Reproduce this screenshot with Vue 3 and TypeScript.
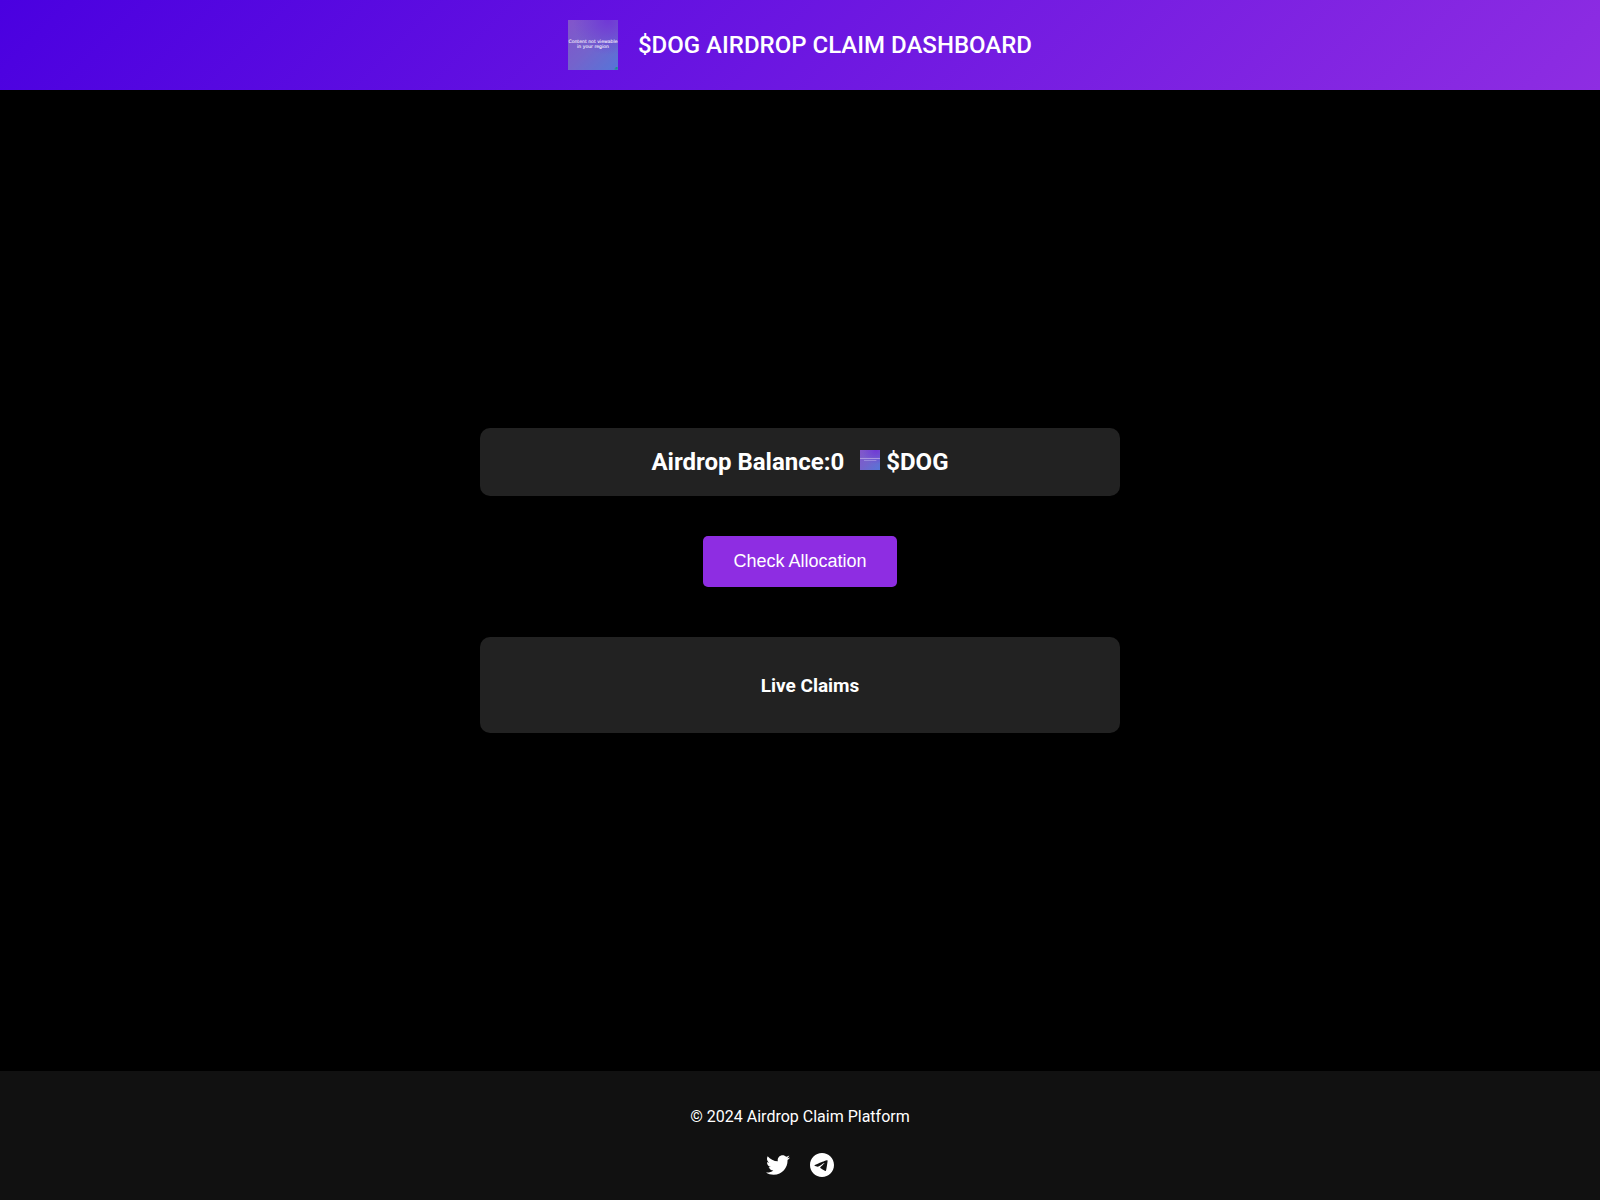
<script setup lang="ts">
import { ref } from 'vue'

interface SocialLink {
  label: string
  href: string
  viewBox: string
  path: string
}

const balance = ref<number>(0)
const claims = ref<string[]>([])

const socials: SocialLink[] = [
  {
    label: 'Twitter',
    href: '#twitter',
    viewBox: '0 0 512 512',
    path: 'M459.37 151.716c.325 4.548.325 9.097.325 13.645 0 138.72-105.583 298.558-298.558 298.558-59.452 0-114.68-17.219-161.137-47.106 8.447.974 16.568 1.299 25.34 1.299 49.055 0 94.213-16.568 130.274-44.832-46.132-.975-84.792-31.188-98.112-72.772 6.498.974 12.995 1.624 19.818 1.624 9.421 0 18.843-1.3 27.614-3.573-48.081-9.747-84.143-51.98-84.143-102.985v-1.299c13.969 7.797 30.214 12.67 47.431 13.319-28.264-18.843-46.781-51.005-46.781-87.391 0-19.492 5.197-37.36 14.294-52.954 51.655 63.675 129.3 105.258 216.365 109.807-1.624-7.797-2.599-15.918-2.599-24.04 0-57.828 46.782-104.934 104.934-104.934 30.213 0 57.502 12.67 76.67 33.137 23.715-4.548 46.456-13.32 66.599-25.34-7.798 24.366-24.366 44.833-46.132 57.827 21.117-2.273 41.584-8.122 60.426-16.243-14.292 20.791-32.161 39.308-52.628 54.253z',
  },
  {
    label: 'Telegram',
    href: '#telegram',
    viewBox: '0 8 496 496',
    path: 'M248,8C111.033,8,0,119.033,0,256S111.033,504,248,504,496,392.967,496,256,384.967,8,248,8ZM362.952,176.66c-3.732,39.215-19.881,134.378-28.1,178.3-3.476,18.584-10.322,24.816-16.948,25.425-14.4,1.326-25.338-9.517-39.287-18.661-21.827-14.308-34.158-23.215-55.346-37.177-24.485-16.135-8.612-25,5.342-39.5,3.652-3.793,67.107-61.51,68.335-66.746.153-.655.3-3.1-1.154-4.384s-3.59-.849-5.135-.5q-3.283.746-104.608,69.142-14.845,10.194-26.894,9.934c-8.855-.191-25.888-5.006-38.551-9.123-15.531-5.048-27.875-7.717-26.8-16.291q.84-6.7,18.45-13.7,108.446-47.248,144.628-62.3c68.872-28.647,83.183-33.623,92.511-33.789,2.052-.034,6.639.474,9.61,2.885a10.452,10.452,0,0,1,3.53,6.716A43.765,43.765,0,0,1,362.952,176.66Z',
  },
]
</script>

<template>
  <div class="page">
    <header class="header">
      <svg class="logo" viewBox="0 0 500 500">
        <defs>
          <linearGradient id="tile-base" x1="0" y1="0" x2="1" y2="1">
            <stop offset="0" stop-color="#8354cb" />
            <stop offset="0.5" stop-color="#7463cc" />
            <stop offset="1" stop-color="#5576d8" />
          </linearGradient>
          <radialGradient id="tile-glow" cx="0.8" cy="0" r="0.7">
            <stop offset="0" stop-color="#7038d6" />
            <stop offset="1" stop-color="#7038d6" stop-opacity="0" />
          </radialGradient>
        </defs>
        <rect width="500" height="500" fill="url(#tile-base)" />
        <rect width="500" height="500" fill="url(#tile-glow)" />
        <text class="tile-text" x="250" y="230">Content not viewable</text>
        <text class="tile-text" x="250" y="276">in your region</text>
        <path d="M466 484h10v-14h20v26h-30z" fill="#1d8f8c" />
      </svg>
      <h1 class="title">$DOG AIRDROP CLAIM DASHBOARD</h1>
    </header>

    <main class="main">
      <section class="card balance">
        Airdrop Balance:<span>{{ balance }}</span>
        <svg class="coin" viewBox="0 0 500 500" aria-hidden="true">
          <rect width="500" height="500" fill="url(#tile-base)" />
          <rect width="500" height="500" fill="url(#tile-glow)" />
          <path d="M0 212h500" stroke="#a995df" stroke-width="26" />
          <path d="M100 262h310" stroke="#9a8bdc" stroke-width="24" />
        </svg>
        $DOG
      </section>

      <button class="check" type="button">Check Allocation</button>

      <section class="card claims">
        <h3 class="claims-title">Live Claims</h3>
        <ul v-if="claims.length" class="claims-list">
          <li v-for="claim in claims" :key="claim">{{ claim }}</li>
        </ul>
      </section>
    </main>

    <footer class="footer">
      <p class="copyright">© 2024 Airdrop Claim Platform</p>
      <nav class="socials">
        <a v-for="item in socials" :key="item.label" class="social" :href="item.href" :aria-label="item.label">
          <svg :viewBox="item.viewBox" width="24" height="24" fill="currentColor" aria-hidden="true">
            <path :d="item.path" />
          </svg>
        </a>
      </nav>
    </footer>
  </div>
</template>

<style>
body {
  margin: 0;
  background: #000;
}
</style>

<style scoped>
.page {
  display: flex;
  flex-direction: column;
  min-height: 100vh;
  background: #000;
  color: #fff;
  font-family: Roboto, sans-serif;
  font-size: 16px;
}

.header {
  display: flex;
  align-items: center;
  justify-content: center;
  gap: 20px;
  padding: 20px;
  background: linear-gradient(135deg, #4a00e0, #8e2de2);
}

.logo {
  width: 50px;
  height: 50px;
}

.tile-text {
  fill: #f0eafb;
  stroke: #f0eafb;
  stroke-width: 1px;
  font-family: "DejaVu Sans", sans-serif;
  font-size: 46px;
  text-anchor: middle;
}

.title {
  margin: 0;
  font-size: 24px;
  font-weight: 500;
  line-height: 28px;
}

.main {
  display: flex;
  flex: 1;
  flex-direction: column;
  align-items: center;
  justify-content: center;
}

.card {
  box-sizing: border-box;
  width: 40%;
  border-radius: 10px;
  background: #222;
  text-align: center;
}

.balance {
  padding: 20px;
  font-size: 24px;
  font-weight: 700;
  line-height: 28px;
}

.coin {
  width: 20px;
  height: 20px;
  margin-left: 16px;
}

.check {
  margin: 40px 0 50px;
  padding: 15px 30px;
  border: 0;
  border-radius: 5px;
  background: #8e2de2;
  color: #fff;
  font-family: "Liberation Sans", Arial, sans-serif;
  font-size: 18px;
  line-height: 21px;
  cursor: pointer;
}

.claims {
  padding: 38px 20px 36px 40px;
}

.claims-title {
  margin: 0;
  font-size: 19px;
  font-weight: 700;
  line-height: 22px;
}

.claims-list {
  margin: 16px 0 0;
  padding: 0;
  list-style: none;
}

.footer {
  padding: 36px 20px 23px;
  background: #111;
  text-align: center;
}

.copyright {
  margin: 0 0 27px;
  line-height: 19px;
}

.socials {
  display: flex;
  justify-content: center;
  gap: 20px;
}

.social {
  display: flex;
  color: #fff;
}
</style>
